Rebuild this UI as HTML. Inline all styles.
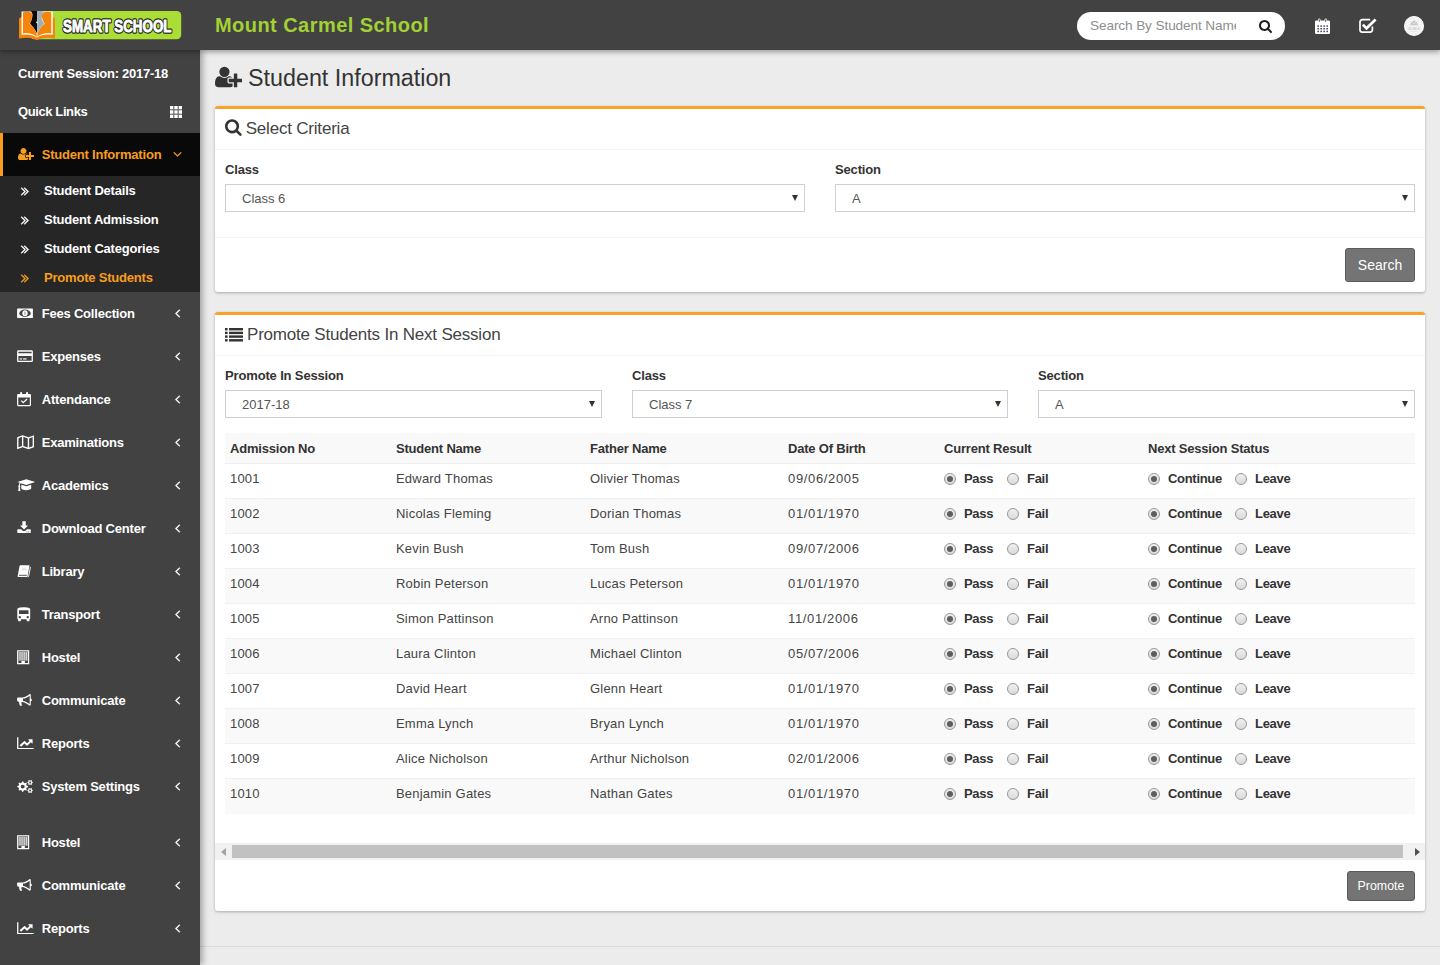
<!DOCTYPE html>
<html lang="en">
<head>
<meta charset="utf-8">
<title>Smart School - Promote Students</title>
<style>
*{box-sizing:border-box;margin:0;padding:0}
html,body{width:1440px;height:965px;overflow:hidden}
body{font-family:"Liberation Sans",Arial,sans-serif;font-size:13px;color:#444;background:#ececec;position:relative}
a{text-decoration:none;color:inherit}
ul{list-style:none}

/* ---------- top bar ---------- */
.topbar{position:absolute;left:0;top:0;width:1440px;height:50px;background:#424242;z-index:30;box-shadow:0 2px 5px rgba(0,0,0,.35)}
.logo{position:absolute;left:0;top:0;width:200px;height:50px}
.school{position:absolute;left:215px;top:13px;font-size:20px;line-height:24px;font-weight:bold;color:#a2d134;letter-spacing:.45px;white-space:nowrap}
.search{position:absolute;left:1077px;top:12px;width:208px;height:28px;border-radius:14px;background:#fff}
.search span{position:absolute;left:13px;top:0;width:146px;line-height:28px;font-size:13.6px;letter-spacing:-.1px;color:#8e8e8e;white-space:nowrap;overflow:hidden}
.search svg{position:absolute;left:182.400px;top:7.100px}
.tb-ico{position:absolute;top:17px}
.avatar{position:absolute;left:1404px;top:15.800px;width:20px;height:20px;border-radius:50%;background:#f3f3f3;overflow:hidden}

/* ---------- sidebar ---------- */
.sidebar{position:absolute;left:0;top:50px;width:200px;height:915px;background:#424242;z-index:20;box-shadow:3px 0 6px rgba(0,0,0,.3);color:#fff;font-weight:bold;font-size:13px;letter-spacing:-.2px}
.sidebar .info{position:absolute;left:18px;white-space:nowrap;line-height:16px;margin-top:1px}
.menu li{position:relative;height:43px;line-height:43px;padding-left:41.700px;white-space:nowrap}
.menu li svg.mi{position:absolute;left:15px;top:12px}
.menu li svg.ch{position:absolute;left:175px;top:14px;overflow:visible}
.menu li.active{background:#090909;color:#f89d1c;border-left:3px solid #f89d1c;padding-left:38.700px}
.menu li.active svg.mi{left:14.900px;top:14.200px}
.menu li.active svg.ch{left:170.150px;top:13.750px}
.sub{background:#262626;height:116px}
.sub li{position:relative;height:29px;line-height:29px;padding-left:44px;white-space:nowrap}
.sub li svg{position:absolute;left:21.200px;top:7.500px;overflow:visible}
.sub li.on{color:#f89d1c}
.gap{height:13px}

/* ---------- content ---------- */
.content{position:absolute;left:200px;top:50px;width:1240px;height:915px}
h1.page{position:absolute;left:15px;top:13px;font-size:23.3px;line-height:30px;font-weight:normal;color:#333;white-space:nowrap;padding-left:33px}
h1.page svg{position:absolute;left:0;top:2px}
.box{position:absolute;left:15px;width:1210px;background:#fff;border-top:3px solid #f7a228;border-radius:3px;box-shadow:0 1px 3px rgba(0,0,0,.28)}
.box-h{height:41px;border-bottom:1px solid #f4f4f4;position:relative}
.box-h h3{position:absolute;left:10px;top:8px;font-size:17px;line-height:24px;font-weight:normal;color:#444;white-space:nowrap;letter-spacing:-.2px}
.box-h h3 svg{vertical-align:-2px;margin-right:4px}
label.fl{position:absolute;font-weight:bold;letter-spacing:-.15px;font-size:13px;line-height:16px;color:#333;white-space:nowrap}
.sel{position:absolute;height:28px;border:1px solid #cdd0d8;background:#fff;font-size:13px;line-height:27px;color:#555;padding-left:16px}
.sel:after{content:"";position:absolute;right:6px;top:10px;border:3.5px solid transparent;border-top:6px solid #333;border-bottom:0}
.btn{position:absolute;background:#747474;border:1px solid #5b5b5b;border-radius:3px;color:#fff;text-align:center;white-space:nowrap}

table.t{position:absolute;left:10px;top:118px;width:1190px;border-collapse:collapse;font-size:13px;color:#444}
table.t th{height:30.500px;text-align:left;letter-spacing:-.2px;font-weight:bold;color:#333;background:#f9f9f9;padding:0 0 0 5px;border-bottom:1px solid #efefef}
table.t td{height:35px;padding:0 0 5px 5px;border-top:1px solid #f1f1f1;vertical-align:middle;white-space:nowrap;letter-spacing:.2px}
table.t td:nth-child(4){letter-spacing:.65px}
table.t tbody tr:nth-child(even) td{background:#f9f9f9}
.r{display:inline-block;position:relative;width:12px;height:12px;border-radius:50%;border:1px solid #989898;background:linear-gradient(#f0f0f0,#dadada);vertical-align:-2px}
.r.c:after{content:"";position:absolute;left:2px;top:2px;width:6px;height:6px;border-radius:50%;background:#5e5e5e}
.rl{font-weight:bold;color:#333;margin-left:8px;display:inline-block;letter-spacing:-.3px}
.scroll{position:absolute;left:0;top:528px;width:1210px;height:17px;background:#f1f1f1}
.scroll i{position:absolute;left:17px;top:2px;width:1171px;height:13px;background:#c1c1c1}
.scroll b{position:absolute;top:5px;border:4px solid transparent}
.footline{position:absolute;left:0;top:896px;width:1240px;height:1px;background:#d9dbe2}
</style>
</head>
<body>

<header class="topbar">
  <a class="logo"><svg width="200" height="50" viewBox="0 0 200 50"><rect x="30" y="10.900" width="151.200" height="28.400" rx="4.500" fill="#aadd35"/><path d="M19 18.600Q20.200 17.300 22 17H52Q53.800 17.300 55 18.600V38.600Q44 36.600 37 39.900 30 36.600 19 38.600Z" fill="#f4840a"/><path d="M21.500 11.400H52.800V34.700Q43 33.400 37 37.600 31 33.400 21.500 34.700Z" fill="#fff6ea"/><path d="M31 11H37.200V33.500Q34 27.500 30 23.500 32.500 19 32.500 14Z" fill="#0a0a0a"/><path d="M37.200 11H43.200Q41.500 15 41.700 19 42.500 21.500 44.200 23.500 40 27.500 37.200 33.500Z" fill="#9eb1ba"/><path d="M23 12.200Q27 11.400 31.200 12.400 33 14.500 32.300 17.500 31.600 20.800 29.400 23.500 35 28 36.700 34V36.700Q31 32.300 23 33.200Z" fill="#f4840a"/><path d="M51.200 12.200Q47 11.400 43 12.400 41.200 14.500 41.900 17.500 42.600 20.800 44.800 23.500 39.200 28 37.500 34V36.700Q43.200 32.300 51.200 33.200Z" fill="#f4840a"/><circle cx="37" cy="22.300" r="0.900" fill="#fff"/><g font-family="'Liberation Sans',Arial,sans-serif" font-weight="bold" font-size="17.400"><text x="63" y="32.200" textLength="108.500" lengthAdjust="spacingAndGlyphs" fill="#262626" stroke="#262626" stroke-width="3.400" stroke-linejoin="round">SMART SCHOOL</text><text x="63" y="32.200" textLength="108.500" lengthAdjust="spacingAndGlyphs" fill="#fff" stroke="#fff" stroke-width="0.900" stroke-linejoin="round">SMART SCHOOL</text></g></svg>
</a>
  <div class="school">Mount Carmel School</div>
  <form class="search"><span>Search By Student Name</span><svg width="13" height="14" viewBox="0 0 1664 1792"><path d="M1152 832q0-185-131.500-316.500t-316.500-131.500-316.500 131.500-131.500 316.500 131.500 316.500 316.500 131.500 316.500-131.500 131.500-316.500zM1664 1664q0 52-38 90t-90 38q-54 0-90-38l-343-342q-179 124-399 124-143 0-273.500-55.500t-225-150-150-225-55.500-273.500 55.500-273.500 150-225 225-150 273.500-55.500 273.500 55.500 225 150 150 225 55.500 273.500q0 220-124 399l343 343q37 37 37 90z" fill="#1e1e1e"/></svg></form>
  <svg class="tb-ico" style="left:1315.200px;top:17.600px" width="15" height="16" viewBox="0 0 15 16"><path d="M1.200 2.600h12.600a1.200 1.200 0 0 1 1.200 1.200v10.900a1.200 1.200 0 0 1-1.200 1.200H1.200a1.200 1.200 0 0 1-1.200-1.200V3.800a1.200 1.200 0 0 1 1.200-1.200z" fill="#fff"/><rect x="3.200" y="0.400" width="2.200" height="4" rx="1" fill="#fff"/><rect x="9.600" y="0.400" width="2.200" height="4" rx="1" fill="#fff"/><rect x="3.800" y="1.200" width="1" height="2.600" rx="0.500" fill="#424242"/><rect x="10.200" y="1.200" width="1" height="2.600" rx="0.500" fill="#424242"/><rect x="2.4" y="7.3" width="1.500" height="1.500" fill="#3b3b55"/><rect x="5.4" y="7.3" width="1.500" height="1.500" fill="#3b3b55"/><rect x="8.4" y="7.3" width="1.500" height="1.500" fill="#3b3b55"/><rect x="11.4" y="7.3" width="1.500" height="1.500" fill="#3b3b55"/><rect x="2.4" y="10" width="1.500" height="1.500" fill="#3b3b55"/><rect x="5.4" y="10" width="1.500" height="1.500" fill="#3b3b55"/><rect x="8.4" y="10" width="1.500" height="1.500" fill="#3b3b55"/><rect x="11.4" y="10" width="1.500" height="1.500" fill="#3b3b55"/><rect x="2.4" y="12.7" width="1.500" height="1.500" fill="#3b3b55"/><rect x="5.4" y="12.7" width="1.500" height="1.500" fill="#3b3b55"/><rect x="8.4" y="12.7" width="1.500" height="1.500" fill="#3b3b55"/><rect x="11.4" y="12.7" width="1.500" height="1.500" fill="#3b3b55"/></svg><svg class="tb-ico" style="left:1358.500px;top:17px" width="19" height="17" viewBox="0 0 19 17"><path d="M13.400 9.500v3.400a2.200 2.200 0 0 1-2.200 2.200H3.200a2.200 2.200 0 0 1-2.200-2.200V4.900a2.200 2.200 0 0 1 2.200-2.200h8" fill="none" stroke="#fff" stroke-width="1.700"/><path d="M3.800 7.600l3.700 3.700 9.100-8.700" fill="none" stroke="#fff" stroke-width="2.700"/></svg>
  <div class="avatar"><svg width="20" height="20" viewBox="0 0 20 20"><circle cx="10" cy="10" r="10" fill="#f3f3f3"/><circle cx="10" cy="5.800" r="1.300" fill="#c6c6c6"/><circle cx="7.800" cy="6.800" r="1.100" fill="#cdcdcd"/><circle cx="12.200" cy="6.800" r="1.100" fill="#cdcdcd"/><path d="M6 9.300q0.300-2.300 2-2.300 1 0.600 2 0.600t2-0.600q1.700 0 2 2.300z" fill="#c9c9c9"/><text x="10" y="13.600" text-anchor="middle" font-family="'Liberation Sans',Arial,sans-serif" font-weight="bold" font-size="2.700" fill="#cfcfcf" textLength="11.600" lengthAdjust="spacingAndGlyphs">NO IMAGE</text><rect x="6" y="15.400" width="8" height="0.500" fill="#e0e0e0"/></svg></div>
</header>

<aside class="sidebar">
  <div class="info" style="top:15px;letter-spacing:-.25px">Current Session: 2017-18</div>
  <div class="info" style="top:53px;letter-spacing:-.4px">Quick Links</div>
  <svg style="position:absolute;left:170px;top:56px" width="12" height="12" viewBox="0 0 12 12"><rect x="0" y="0" width="3.400" height="3.400" fill="#fff"/><rect x="4.3" y="0" width="3.400" height="3.400" fill="#fff"/><rect x="8.6" y="0" width="3.400" height="3.400" fill="#fff"/><rect x="0" y="4.3" width="3.400" height="3.400" fill="#fff"/><rect x="4.3" y="4.3" width="3.400" height="3.400" fill="#fff"/><rect x="8.6" y="4.3" width="3.400" height="3.400" fill="#fff"/><rect x="0" y="8.6" width="3.400" height="3.400" fill="#fff"/><rect x="4.3" y="8.6" width="3.400" height="3.400" fill="#fff"/><rect x="8.6" y="8.6" width="3.400" height="3.400" fill="#fff"/></svg>
  <ul class="menu" style="position:absolute;left:0;top:83px;width:200px">
    <li class="active"><svg class="mi" width="16" height="14" viewBox="0 0 2048 1792"><path d="M704 896q-159 0-271.500-112.500t-112.500-271.500 112.500-271.500 271.500-112.500 271.500 112.500 112.500 271.500-112.500 271.500-271.500 112.500zM1664 1024h352q13 0 22.500 9.500t9.500 22.500v192q0 13-9.500 22.500t-22.500 9.500h-352v352q0 13-9.500 22.500t-22.500 9.500h-192q-13 0-22.500-9.500t-9.500-22.500v-352h-352q-13 0-22.500-9.500t-9.500-22.500v-192q0-13 9.500-22.500t22.500-9.500h352v-352q0-13 9.500-22.500t22.500-9.500h192q13 0 22.500 9.500t9.500 22.500v352zM928 1248q0 52 38 90t90 38h256v238q-68 50-171 50h-874q-121 0-194-69t-73-190q0-53 3.500-103.500t14-109 26.500-108.500 43-97.500 62-81 85.500-53.500 111.500-20q19 0 39 17 79 61 154.500 91.500t164.500 30.500 164.500-30.500 154.500-91.500q20-17 39-17 132 0 217 96h-223q-52 0-90 38t-38 90v192z" fill="currentColor"/></svg>Student Information<svg class="ch" width="9" height="14" viewBox="0 0 1152 1792"><path d="M1075 736q0 13-10 23l-466 466q-10 10-23 10t-23-10l-466-466q-10-10-10-23t10-23l50-50q10-10 23-10t23 10l393 393 393-393q10-10 23-10t23 10l50 50q10 10 10 23z" fill="currentColor" stroke="currentColor" stroke-width="40"/></svg></li>
    <li style="height:auto;padding:0;line-height:normal"><ul class="sub"><li><svg width="8" height="14" viewBox="0 0 1024 1792"><path d="M595 960q0 13-10 23l-466 466q-10 10-23 10t-23-10l-50-50q-10-10-10-23t10-23l393-393-393-393q-10-10-10-23t10-23l50-50q10-10 23-10t23 10l466 466q10 10 10 23zM979 960q0 13-10 23l-466 466q-10 10-23 10t-23-10l-50-50q-10-10-10-23t10-23l393-393-393-393q-10-10-10-23t10-23l50-50q10-10 23-10t23 10l466 466q10 10 10 23z" fill="currentColor" stroke="currentColor" stroke-width="50"/></svg>Student Details</li><li><svg width="8" height="14" viewBox="0 0 1024 1792"><path d="M595 960q0 13-10 23l-466 466q-10 10-23 10t-23-10l-50-50q-10-10-10-23t10-23l393-393-393-393q-10-10-10-23t10-23l50-50q10-10 23-10t23 10l466 466q10 10 10 23zM979 960q0 13-10 23l-466 466q-10 10-23 10t-23-10l-50-50q-10-10-10-23t10-23l393-393-393-393q-10-10-10-23t10-23l50-50q10-10 23-10t23 10l466 466q10 10 10 23z" fill="currentColor" stroke="currentColor" stroke-width="50"/></svg>Student Admission</li><li><svg width="8" height="14" viewBox="0 0 1024 1792"><path d="M595 960q0 13-10 23l-466 466q-10 10-23 10t-23-10l-50-50q-10-10-10-23t10-23l393-393-393-393q-10-10-10-23t10-23l50-50q10-10 23-10t23 10l466 466q10 10 10 23zM979 960q0 13-10 23l-466 466q-10 10-23 10t-23-10l-50-50q-10-10-10-23t10-23l393-393-393-393q-10-10-10-23t10-23l50-50q10-10 23-10t23 10l466 466q10 10 10 23z" fill="currentColor" stroke="currentColor" stroke-width="50"/></svg>Student Categories</li><li class="on"><svg width="8" height="14" viewBox="0 0 1024 1792"><path d="M595 960q0 13-10 23l-466 466q-10 10-23 10t-23-10l-50-50q-10-10-10-23t10-23l393-393-393-393q-10-10-10-23t10-23l50-50q10-10 23-10t23 10l466 466q10 10 10 23zM979 960q0 13-10 23l-466 466q-10 10-23 10t-23-10l-50-50q-10-10-10-23t10-23l393-393-393-393q-10-10-10-23t10-23l50-50q10-10 23-10t23 10l466 466q10 10 10 23z" fill="currentColor" stroke="currentColor" stroke-width="50"/></svg>Promote Students</li></ul></li>
    <li><svg class="mi" width="22" height="18" viewBox="0 0 22 18"><g transform="translate(2.100 1.650) scale(0.9875 0.9500)"><rect x="0" y="3" width="16" height="10" rx="0.400" fill="currentColor"/><ellipse cx="8" cy="8" rx="5.800" ry="3.900" fill="#424242"/><ellipse cx="8" cy="8" rx="2.700" ry="3.100" fill="currentColor"/><rect x="7.500" y="6.300" width="1" height="3.400" fill="#8a8a8a"/></g></svg>Fees Collection<svg class="ch" width="5" height="14" viewBox="0 0 640 1792"><path d="M627 544q0 13-10 23l-393 393 393 393q10 10 10 23t-10 23l-50 50q-10 10-23 10t-23-10l-466-466q-10-10-10-23t10-23l466-466q10-10 23-10t23 10l50 50q10 10 10 23z" fill="currentColor" stroke="currentColor" stroke-width="50"/></svg></li>
    <li><svg class="mi" width="22" height="18" viewBox="0 0 22 18"><g transform="translate(2.100 0.557) scale(0.9875 1.0773)"><path fill-rule="evenodd" d="M1.3 2.5h13.4a1.3 1.3 0 0 1 1.3 1.3v8.4a1.3 1.3 0 0 1-1.3 1.3H1.300a1.3 1.3 0 0 1-1.3-1.3V3.800a1.3 1.3 0 0 1 1.3-1.300zM1.300 7.800v4.400h13.400V7.800zM1.300 3.800v1.400h13.400V3.800z" fill="currentColor"/><rect x="2.6" y="10" width="2.4" height="1.1" fill="currentColor"/><rect x="6" y="10" width="3.6" height="1.1" fill="currentColor"/></g></svg>Expenses<svg class="ch" width="5" height="14" viewBox="0 0 640 1792"><path d="M627 544q0 13-10 23l-393 393 393 393q10 10 10 23t-10 23l-50 50q-10 10-23 10t-23-10l-466-466q-10-10-10-23t10-23l466-466q10-10 23-10t23 10l50 50q10 10 10 23z" fill="currentColor" stroke="currentColor" stroke-width="50"/></svg></li>
    <li><svg class="mi" width="22" height="18" viewBox="0 0 22 18"><g transform="translate(2.100 1.634) scale(0.9267 0.9161)"><path fill-rule="evenodd" d="M1.200 2.600h12.600a1.200 1.200 0 0 1 1.200 1.200v10.900a1.200 1.200 0 0 1-1.200 1.200H1.200a1.200 1.200 0 0 1-1.200-1.200V3.800a1.200 1.200 0 0 1 1.200-1.200zM1.300 6.300v8.300h12.400V6.300z" fill="currentColor"/><rect x="3.200" y="0.400" width="2.200" height="4" rx="1" fill="currentColor"/><rect x="9.600" y="0.400" width="2.200" height="4" rx="1" fill="currentColor"/><path d="M4 10.300l1-1 1.700 1.700 3.500-3.500 1 1-4.500 4.500z" fill="currentColor"/></g></svg>Attendance<svg class="ch" width="5" height="14" viewBox="0 0 640 1792"><path d="M627 544q0 13-10 23l-393 393 393 393q10 10 10 23t-10 23l-50 50q-10 10-23 10t-23-10l-466-466q-10-10-10-23t10-23l466-466q10-10 23-10t23 10l50 50q10 10 10 23z" fill="currentColor" stroke="currentColor" stroke-width="50"/></svg></li>
    <li><svg class="mi" width="22" height="18" viewBox="0 0 22 18"><g transform="translate(2.100 0.965) scale(1.0562 1.0294)"><path fill-rule="evenodd" d="M0 3.200l5.200-2 5.600 2 5.200-2v11.600l-5.200 2-5.600-2-5.200 2zM1.300 4.100v8.900l3.300-1.300V2.800zM5.900 2.800v8.900l4.200 1.500V4.300zM11.400 4.300v8.900l3.300-1.300V3z" fill="currentColor"/></g></svg>Examinations<svg class="ch" width="5" height="14" viewBox="0 0 640 1792"><path d="M627 544q0 13-10 23l-393 393 393 393q10 10 10 23t-10 23l-50 50q-10 10-23 10t-23-10l-466-466q-10-10-10-23t10-23l466-466q10-10 23-10t23 10l50 50q10 10 10 23z" fill="currentColor" stroke="currentColor" stroke-width="50"/></svg></li>
    <li><svg class="mi" width="22" height="18" viewBox="0 0 22 18"><g transform="translate(2.084 0.922) scale(1.0783 1.0580)"><path d="M8.500 2.200l8.300 2.700-8.300 2.700L3.300 5.900v0C2.800 6.400 2.600 7.200 2.500 8c0.400 0.200 0.600 0.500 0.600 0.900 0 0.400-0.200 0.700-0.500 0.900l0.500 3.600H1l0.500-3.600C1.200 9.600 1 9.300 1 8.900c0-0.400 0.200-0.800 0.600-0.900 0.100-1 0.400-1.900 0.900-2.500L0.200 4.900z" fill="currentColor"/><path d="M4 7.300l4.500 1.500L13 7.300l0.200 3.100c0 1.200-2.100 2.100-4.700 2.100s-4.700-0.900-4.700-2.100z" fill="currentColor"/></g></svg>Academics<svg class="ch" width="5" height="14" viewBox="0 0 640 1792"><path d="M627 544q0 13-10 23l-393 393 393 393q10 10 10 23t-10 23l-50 50q-10 10-23 10t-23-10l-466-466q-10-10-10-23t10-23l466-466q10-10 23-10t23 10l50 50q10 10 10 23z" fill="currentColor" stroke="currentColor" stroke-width="50"/></svg></li>
    <li><svg class="mi" width="22" height="18" viewBox="0 0 22 18"><g transform="translate(2.300 1.363) scale(0.8438 0.8369)"><path d="M6 1h4v5h2.800L8 10.800 3.200 6H6z" fill="currentColor"/><path fill-rule="evenodd" d="M0.800 10.500h3.700l1.600 1.600c1 1 2.800 1 3.800 0l1.600-1.600h3.700c0.400 0 0.800 0.300 0.800 0.800v3c0 0.400-0.300 0.800-0.800 0.800H0.800c-0.400 0-0.800-0.300-0.800-0.800v-3c0-0.400 0.300-0.800 0.800-0.800zM11.400 13.300a0.600 0.600 0 1 0 0.001 0zM13.600 13.300a0.600 0.600 0 1 0 0.001 0z" fill="currentColor"/></g></svg>Download Center<svg class="ch" width="5" height="14" viewBox="0 0 640 1792"><path d="M627 544q0 13-10 23l-393 393 393 393q10 10 10 23t-10 23l-50 50q-10 10-23 10t-23-10l-466-466q-10-10-10-23t10-23l466-466q10-10 23-10t23 10l50 50q10 10 10 23z" fill="currentColor" stroke="currentColor" stroke-width="50"/></svg></li>
    <li><svg class="mi" width="22" height="18" viewBox="0 0 22 18"><g transform="translate(0.000 0.000) scale(1.0000 1.0000)"><path d="M5.700 3.300h8.200q0.700 0 0.550 0.700l-1.950 10.400q-0.150 0.700-0.850 0.700H3.300q-0.800 0-0.650-0.800l1.900-10.200q0.150-0.800 1.150-0.800z" fill="currentColor"/><path d="M14.900 4.600q0.600 0.300 0.450 1l-1.700 8.600q-0.200 0.900-1 0.900" fill="none" stroke="currentColor" stroke-width="0.900"/><path d="M4 13.300h7.800" stroke="#424242" stroke-width="0.900"/><path d="M7 6.100h4.800M6.700 7.800h4.800" stroke="#cfcfcf" stroke-width="0.800"/></g></svg>Library<svg class="ch" width="5" height="14" viewBox="0 0 640 1792"><path d="M627 544q0 13-10 23l-393 393 393 393q10 10 10 23t-10 23l-50 50q-10 10-23 10t-23-10l-466-466q-10-10-10-23t10-23l466-466q10-10 23-10t23 10l50 50q10 10 10 23z" fill="currentColor" stroke="currentColor" stroke-width="50"/></svg></li>
    <li><svg class="mi" width="22" height="18" viewBox="0 0 22 18"><g transform="translate(0.150 1.613) scale(1.0750 0.9790)"><path fill-rule="evenodd" d="M2 2.600C2 1.400 4.700 0.600 8 0.600s6 0.800 6 2v9.200c0 0.500-0.300 0.900-0.700 1.100v1.300c0 0.400-0.300 0.700-0.700 0.700h-1.200c-0.400 0-0.700-0.300-0.700-0.700V13H5.300v1.200c0 0.400-0.300 0.700-0.700 0.700H3.400c-0.400 0-0.700-0.300-0.700-0.700v-1.300C2.300 12.700 2 12.300 2 11.800zM3.600 3.800v3.800h8.800V3.800zM4.300 9.600a1.100 1.100 0 1 0 0.001 0zM11.700 9.600a1.100 1.100 0 1 0 0.001 0z" fill="currentColor"/></g></svg>Transport<svg class="ch" width="5" height="14" viewBox="0 0 640 1792"><path d="M627 544q0 13-10 23l-393 393 393 393q10 10 10 23t-10 23l-50 50q-10 10-23 10t-23-10l-466-466q-10-10-10-23t10-23l466-466q10-10 23-10t23 10l50 50q10 10 10 23z" fill="currentColor" stroke="currentColor" stroke-width="50"/></svg></li>
    <li><svg class="mi" width="22" height="18" viewBox="0 0 22 18"><g transform="translate(0.083 1.647) scale(1.0083 0.9211)"><path fill-rule="evenodd" d="M2 0.600h12v15.200H2zM3.200 1.800v12.800h9.600V1.800z" fill="currentColor"/><rect x="3.200" y="1.800" width="9.600" height="10.400" fill="currentColor" opacity="0.350"/><rect x="4.3" y="2.600" width="1.100" height="9" fill="currentColor" opacity="0.750"/><rect x="6.4" y="2.600" width="1.100" height="9" fill="currentColor" opacity="0.750"/><rect x="8.5" y="2.600" width="1.100" height="9" fill="currentColor" opacity="0.750"/><rect x="10.6" y="2.600" width="1.100" height="9" fill="currentColor" opacity="0.750"/><rect x="6.300" y="12.200" width="3.400" height="2.600" fill="currentColor"/></g></svg>Hostel<svg class="ch" width="5" height="14" viewBox="0 0 640 1792"><path d="M627 544q0 13-10 23l-393 393 393 393q10 10 10 23t-10 23l-50 50q-10 10-23 10t-23-10l-466-466q-10-10-10-23t10-23l466-466q10-10 23-10t23 10l50 50q10 10 10 23z" fill="currentColor" stroke="currentColor" stroke-width="50"/></svg></li>
    <li><svg class="mi" width="22" height="18" viewBox="0 0 22 18"><g transform="translate(2.100 2.115) scale(0.9250 0.9837)"><path d="M14.800 5.800c0.600 0 1.200 0.500 1.200 1.200s-0.500 1.200-1.200 1.200v3.500c0 0.600-0.500 1.200-1.200 1.200C10.400 10.200 7.400 9.200 5.300 9c-0.700 0.200-1 1.100-0.500 1.600-0.400 0.700 0.200 1.200 0.800 1.700-0.400 0.700-1.900 0.900-2.600 0.300C2.500 11.200 1.900 10.100 2.300 8.700H1.400C0.600 8.700 0 8.100 0 7.300V5.600c0-0.600 0.500-1.200 1.200-1.200h4.400C8 4.400 10.600 3.300 13.600 0.900c0.600 0 1.200 0.500 1.200 1.200zM13.600 11.100V2.600C11.100 4.500 8.700 5.400 6.400 5.600v2.300C8.700 8.200 11.100 9.200 13.600 11.100z" fill-rule="evenodd" fill="currentColor"/></g></svg>Communicate<svg class="ch" width="5" height="14" viewBox="0 0 640 1792"><path d="M627 544q0 13-10 23l-393 393 393 393q10 10 10 23t-10 23l-50 50q-10 10-23 10t-23-10l-466-466q-10-10-10-23t10-23l466-466q10-10 23-10t23 10l50 50q10 10 10 23z" fill="currentColor" stroke="currentColor" stroke-width="50"/></svg></li>
    <li><svg class="mi" width="22" height="18" viewBox="0 0 22 18"><g transform="translate(2.100 1.883) scale(0.9794 0.9115)"><path d="M0 1.500h1.300v11.700H17v1.300H0z" fill="currentColor"/><path d="M15.800 3.800v4.300c0 0.300-0.300 0.400-0.500 0.200l-1.200-1.200-3.700 3.700c-0.100 0.100-0.300 0.100-0.500 0L7.500 8.400l-3.400 3.400-1.500-1.500 4.700-4.700c0.100-0.100 0.300-0.100 0.500 0L10.200 8l2.500-2.500-1.200-1.200c-0.200-0.200-0.100-0.500 0.200-0.500z" fill="currentColor"/></g></svg>Reports<svg class="ch" width="5" height="14" viewBox="0 0 640 1792"><path d="M627 544q0 13-10 23l-393 393 393 393q10 10 10 23t-10 23l-50 50q-10 10-23 10t-23-10l-466-466q-10-10-10-23t10-23l466-466q10-10 23-10t23 10l50 50q10 10 10 23z" fill="currentColor" stroke="currentColor" stroke-width="50"/></svg></li>
    <li><svg class="mi" width="22" height="18" viewBox="0 0 22 18"><g transform="translate(2.300 1.962) scale(0.9630 0.9306)"><path fill-rule="evenodd" d="M11.17 7.65L11.17 8.75L9.62 9.42L9.30 10.18L9.93 11.75L9.15 12.53L7.58 11.90L6.82 12.22L6.15 13.77L5.05 13.77L4.38 12.22L3.62 11.90L2.05 12.53L1.27 11.75L1.90 10.18L1.58 9.42L0.03 8.75L0.03 7.65L1.58 6.98L1.90 6.22L1.27 4.65L2.05 3.87L3.62 4.50L4.38 4.18L5.05 2.63L6.15 2.63L6.82 4.18L7.58 4.50L9.15 3.87L9.93 4.65L9.30 6.22L9.62 6.98ZM7.70 8.20a2.1 2.1 0 1 0 -4.20 0a2.1 2.1 0 1 0 4.20 0Z" fill="currentColor"/><path fill-rule="evenodd" d="M16.18 3.42L16.18 4.18L15.24 4.60L14.97 5.08L15.07 6.10L14.41 6.48L13.57 5.88L13.03 5.88L12.19 6.48L11.53 6.10L11.63 5.08L11.36 4.60L10.42 4.18L10.42 3.42L11.36 3.00L11.63 2.52L11.53 1.50L12.19 1.12L13.03 1.72L13.57 1.72L14.41 1.12L15.07 1.50L14.97 2.52L15.24 3.00ZM14.30 3.80a1 1 0 1 0 -2.00 0a1 1 0 1 0 2.00 0Z" fill="currentColor"/><path fill-rule="evenodd" d="M16.18 12.02L16.18 12.78L15.24 13.20L14.97 13.68L15.07 14.70L14.41 15.08L13.57 14.48L13.03 14.48L12.19 15.08L11.53 14.70L11.63 13.68L11.36 13.20L10.42 12.78L10.42 12.02L11.36 11.60L11.63 11.12L11.53 10.10L12.19 9.72L13.03 10.32L13.57 10.32L14.41 9.72L15.07 10.10L14.97 11.12L15.24 11.60ZM14.30 12.40a1 1 0 1 0 -2.00 0a1 1 0 1 0 2.00 0Z" fill="currentColor"/></g></svg>System Settings<svg class="ch" width="5" height="14" viewBox="0 0 640 1792"><path d="M627 544q0 13-10 23l-393 393 393 393q10 10 10 23t-10 23l-50 50q-10 10-23 10t-23-10l-466-466q-10-10-10-23t10-23l466-466q10-10 23-10t23 10l50 50q10 10 10 23z" fill="currentColor" stroke="currentColor" stroke-width="50"/></svg></li>
    <li class="gap" style="height:13px"></li>
    <li><svg class="mi" width="22" height="18" viewBox="0 0 22 18"><g transform="translate(0.083 1.647) scale(1.0083 0.9211)"><path fill-rule="evenodd" d="M2 0.600h12v15.200H2zM3.200 1.800v12.800h9.600V1.800z" fill="currentColor"/><rect x="3.200" y="1.800" width="9.600" height="10.400" fill="currentColor" opacity="0.350"/><rect x="4.3" y="2.600" width="1.100" height="9" fill="currentColor" opacity="0.750"/><rect x="6.4" y="2.600" width="1.100" height="9" fill="currentColor" opacity="0.750"/><rect x="8.5" y="2.600" width="1.100" height="9" fill="currentColor" opacity="0.750"/><rect x="10.6" y="2.600" width="1.100" height="9" fill="currentColor" opacity="0.750"/><rect x="6.300" y="12.200" width="3.400" height="2.600" fill="currentColor"/></g></svg>Hostel<svg class="ch" width="5" height="14" viewBox="0 0 640 1792"><path d="M627 544q0 13-10 23l-393 393 393 393q10 10 10 23t-10 23l-50 50q-10 10-23 10t-23-10l-466-466q-10-10-10-23t10-23l466-466q10-10 23-10t23 10l50 50q10 10 10 23z" fill="currentColor" stroke="currentColor" stroke-width="50"/></svg></li>
    <li><svg class="mi" width="22" height="18" viewBox="0 0 22 18"><g transform="translate(2.100 2.115) scale(0.9250 0.9837)"><path d="M14.800 5.800c0.600 0 1.200 0.500 1.200 1.200s-0.500 1.200-1.200 1.200v3.500c0 0.600-0.500 1.200-1.200 1.200C10.400 10.200 7.400 9.200 5.300 9c-0.700 0.200-1 1.100-0.500 1.600-0.400 0.700 0.200 1.200 0.800 1.700-0.400 0.700-1.900 0.900-2.600 0.300C2.500 11.200 1.900 10.100 2.300 8.700H1.400C0.600 8.700 0 8.100 0 7.300V5.600c0-0.600 0.500-1.200 1.200-1.200h4.400C8 4.400 10.600 3.300 13.600 0.900c0.600 0 1.200 0.500 1.200 1.200zM13.600 11.100V2.600C11.100 4.500 8.700 5.400 6.400 5.600v2.300C8.700 8.200 11.100 9.200 13.600 11.100z" fill-rule="evenodd" fill="currentColor"/></g></svg>Communicate<svg class="ch" width="5" height="14" viewBox="0 0 640 1792"><path d="M627 544q0 13-10 23l-393 393 393 393q10 10 10 23t-10 23l-50 50q-10 10-23 10t-23-10l-466-466q-10-10-10-23t10-23l466-466q10-10 23-10t23 10l50 50q10 10 10 23z" fill="currentColor" stroke="currentColor" stroke-width="50"/></svg></li>
    <li><svg class="mi" width="22" height="18" viewBox="0 0 22 18"><g transform="translate(2.100 1.883) scale(0.9794 0.9115)"><path d="M0 1.500h1.300v11.700H17v1.300H0z" fill="currentColor"/><path d="M15.800 3.800v4.300c0 0.300-0.300 0.400-0.500 0.200l-1.200-1.200-3.700 3.700c-0.100 0.100-0.300 0.100-0.500 0L7.500 8.400l-3.400 3.400-1.500-1.500 4.700-4.700c0.100-0.100 0.300-0.100 0.500 0L10.200 8l2.500-2.500-1.200-1.200c-0.200-0.200-0.100-0.500 0.200-0.500z" fill="currentColor"/></g></svg>Reports<svg class="ch" width="5" height="14" viewBox="0 0 640 1792"><path d="M627 544q0 13-10 23l-393 393 393 393q10 10 10 23t-10 23l-50 50q-10 10-23 10t-23-10l-466-466q-10-10-10-23t10-23l466-466q10-10 23-10t23 10l50 50q10 10 10 23z" fill="currentColor" stroke="currentColor" stroke-width="50"/></svg></li>
  </ul>
</aside>

<main class="content">
  <h1 class="page"><svg width="27.43" height="24" viewBox="0 0 2048 1792"><path d="M704 896q-159 0-271.500-112.500t-112.500-271.500 112.500-271.500 271.500-112.500 271.500 112.500 112.500 271.500-112.500 271.500-271.500 112.500zM1664 1024h352q13 0 22.500 9.500t9.500 22.500v192q0 13-9.500 22.500t-22.500 9.500h-352v352q0 13-9.500 22.500t-22.500 9.500h-192q-13 0-22.500-9.500t-9.500-22.500v-352h-352q-13 0-22.500-9.500t-9.500-22.500v-192q0-13 9.500-22.500t22.500-9.500h352v-352q0-13 9.500-22.500t22.500-9.500h192q13 0 22.500 9.500t9.500 22.500v352zM928 1248q0 52 38 90t90 38h256v238q-68 50-171 50h-874q-121 0-194-69t-73-190q0-53 3.500-103.500t14-109 26.500-108.500 43-97.500 62-81 85.500-53.500 111.500-20q19 0 39 17 79 61 154.500 91.500t164.500 30.500 164.500-30.500 154.500-91.500q20-17 39-17 132 0 217 96h-223q-52 0-90 38t-38 90v192z" fill="#333"/></svg>Student Information</h1>

  <section class="box" style="top:56px;height:186px">
    <div class="box-h"><h3><svg width="16.7" height="18" viewBox="0 0 1664 1792"><path d="M1152 832q0-185-131.500-316.500t-316.500-131.500-316.500 131.500-131.500 316.500 131.500 316.500 316.500 131.500 316.500-131.500 131.500-316.500zM1664 1664q0 52-38 90t-90 38q-54 0-90-38l-343-342q-179 124-399 124-143 0-273.500-55.500t-225-150-150-225-55.500-273.500 55.500-273.500 150-225 225-150 273.500-55.500 273.500 55.500 225 150 150 225 55.500 273.500q0 220-124 399l343 343q37 37 37 90z" fill="#333"/></svg>Select Criteria</h3></div>
    <label class="fl" style="left:10px;top:53px">Class</label>
    <div class="sel" style="left:10px;top:75px;width:580px">Class 6</div>
    <label class="fl" style="left:620px;top:53px">Section</label>
    <div class="sel" style="left:620px;top:75px;width:580px">A</div>
    <div style="position:absolute;left:0;top:128px;width:1210px;height:1px;background:#f4f4f4"></div>
    <a class="btn" style="left:1130px;top:139px;width:70px;height:34px;line-height:32px;font-size:14px">Search</a>
  </section>

  <section class="box" style="top:262px;height:599px">
    <div class="box-h"><h3><svg width="18" height="14" viewBox="0 0 18 14"><rect x="0" y="0" width="2.600" height="2.400" fill="#333"/><rect x="4" y="0" width="14" height="2.400" fill="#333"/><rect x="0" y="3.7" width="2.600" height="2.400" fill="#333"/><rect x="4" y="3.7" width="14" height="2.400" fill="#333"/><rect x="0" y="7.4" width="2.600" height="2.400" fill="#333"/><rect x="4" y="7.4" width="14" height="2.400" fill="#333"/><rect x="0" y="11.1" width="2.600" height="2.400" fill="#333"/><rect x="4" y="11.1" width="14" height="2.400" fill="#333"/></svg>Promote Students In Next Session</h3></div>
    <label class="fl" style="left:10px;top:53px">Promote In Session</label>
    <div class="sel" style="left:10px;top:75px;width:377px">2017-18</div>
    <label class="fl" style="left:417px;top:53px">Class</label>
    <div class="sel" style="left:417px;top:75px;width:376px">Class 7</div>
    <label class="fl" style="left:823px;top:53px">Section</label>
    <div class="sel" style="left:823px;top:75px;width:377px">A</div>

    <table class="t">
      <colgroup><col style="width:166px"><col style="width:194px"><col style="width:198px"><col style="width:156px"><col style="width:204px"><col></colgroup>
      <thead><tr><th>Admission No</th><th>Student Name</th><th>Father Name</th><th>Date Of Birth</th><th>Current Result</th><th>Next Session Status</th></tr></thead>
      <tbody>
      <tr><td>1001</td><td>Edward Thomas</td><td>Olivier Thomas</td><td>09/06/2005</td><td><span class="r c"></span><span class="rl" style="width:43px">Pass</span><span class="r"></span><span class="rl">Fail</span></td><td><span class="r c"></span><span class="rl" style="width:67px">Continue</span><span class="r"></span><span class="rl">Leave</span></td></tr>
      <tr><td>1002</td><td>Nicolas Fleming</td><td>Dorian Thomas</td><td>01/01/1970</td><td><span class="r c"></span><span class="rl" style="width:43px">Pass</span><span class="r"></span><span class="rl">Fail</span></td><td><span class="r c"></span><span class="rl" style="width:67px">Continue</span><span class="r"></span><span class="rl">Leave</span></td></tr>
      <tr><td>1003</td><td>Kevin Bush</td><td>Tom Bush</td><td>09/07/2006</td><td><span class="r c"></span><span class="rl" style="width:43px">Pass</span><span class="r"></span><span class="rl">Fail</span></td><td><span class="r c"></span><span class="rl" style="width:67px">Continue</span><span class="r"></span><span class="rl">Leave</span></td></tr>
      <tr><td>1004</td><td>Robin Peterson</td><td>Lucas Peterson</td><td>01/01/1970</td><td><span class="r c"></span><span class="rl" style="width:43px">Pass</span><span class="r"></span><span class="rl">Fail</span></td><td><span class="r c"></span><span class="rl" style="width:67px">Continue</span><span class="r"></span><span class="rl">Leave</span></td></tr>
      <tr><td>1005</td><td>Simon Pattinson</td><td>Arno Pattinson</td><td>11/01/2006</td><td><span class="r c"></span><span class="rl" style="width:43px">Pass</span><span class="r"></span><span class="rl">Fail</span></td><td><span class="r c"></span><span class="rl" style="width:67px">Continue</span><span class="r"></span><span class="rl">Leave</span></td></tr>
      <tr><td>1006</td><td>Laura Clinton</td><td>Michael Clinton</td><td>05/07/2006</td><td><span class="r c"></span><span class="rl" style="width:43px">Pass</span><span class="r"></span><span class="rl">Fail</span></td><td><span class="r c"></span><span class="rl" style="width:67px">Continue</span><span class="r"></span><span class="rl">Leave</span></td></tr>
      <tr><td>1007</td><td>David Heart</td><td>Glenn Heart</td><td>01/01/1970</td><td><span class="r c"></span><span class="rl" style="width:43px">Pass</span><span class="r"></span><span class="rl">Fail</span></td><td><span class="r c"></span><span class="rl" style="width:67px">Continue</span><span class="r"></span><span class="rl">Leave</span></td></tr>
      <tr><td>1008</td><td>Emma Lynch</td><td>Bryan Lynch</td><td>01/01/1970</td><td><span class="r c"></span><span class="rl" style="width:43px">Pass</span><span class="r"></span><span class="rl">Fail</span></td><td><span class="r c"></span><span class="rl" style="width:67px">Continue</span><span class="r"></span><span class="rl">Leave</span></td></tr>
      <tr><td>1009</td><td>Alice Nicholson</td><td>Arthur Nicholson</td><td>02/01/2006</td><td><span class="r c"></span><span class="rl" style="width:43px">Pass</span><span class="r"></span><span class="rl">Fail</span></td><td><span class="r c"></span><span class="rl" style="width:67px">Continue</span><span class="r"></span><span class="rl">Leave</span></td></tr>
      <tr><td>1010</td><td>Benjamin Gates</td><td>Nathan Gates</td><td>01/01/1970</td><td><span class="r c"></span><span class="rl" style="width:43px">Pass</span><span class="r"></span><span class="rl">Fail</span></td><td><span class="r c"></span><span class="rl" style="width:67px">Continue</span><span class="r"></span><span class="rl">Leave</span></td></tr>
      </tbody>
    </table>

    <div class="scroll"><b style="left:5.500px;border-right:5px solid #a3a3a3;border-left:0"></b><i></i><b style="left:1199.500px;border-left:5px solid #505050;border-right:0"></b></div>
    <a class="btn" style="left:1132px;top:556px;width:68px;height:30px;line-height:29px;font-size:12.400px">Promote</a>
  </section>

  <div class="footline"></div>
</main>

</body>
</html>
